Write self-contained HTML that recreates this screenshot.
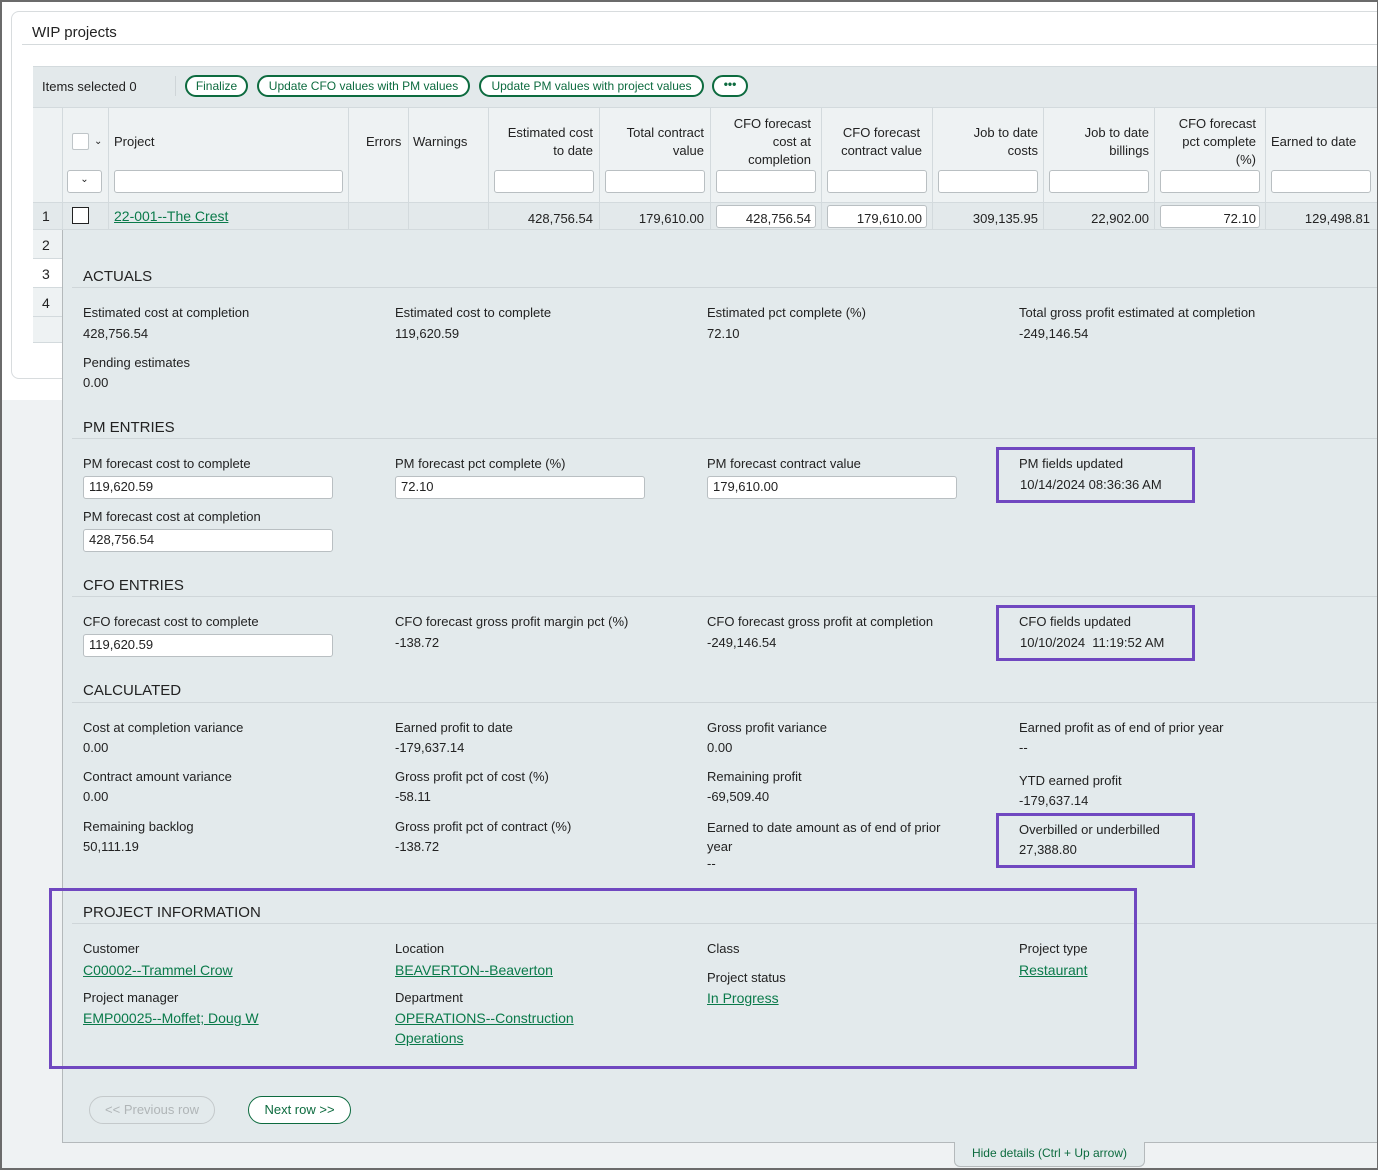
<!DOCTYPE html>
<html><head><meta charset="utf-8"><style>
*{box-sizing:border-box;margin:0;padding:0}
body{width:1378px;height:1170px;position:relative;overflow:hidden;background:#eff2f3;font-family:"Liberation Sans",sans-serif;font-size:13px;color:#222}
.a{position:absolute;white-space:nowrap;line-height:16px}
.l{color:#0a7a4a;text-decoration:underline}
.in{position:absolute;background:#fff;border:1px solid #b9bfc2;border-radius:3px;height:23px}
.btn{position:absolute;top:75px;height:22px;border:2px solid #0d6b3f;border-radius:12px;color:#0d6b3f;font-size:12px;line-height:18px;text-align:center;background:#fff}
.vl{position:absolute;width:1px;background:#d3dadd}
.hd{position:absolute;font-size:15px;line-height:18px;color:#222}
.hr{position:absolute;left:72px;right:0;height:1px;background:#cfd6d9}
.th{position:absolute;line-height:18px;text-align:right;white-space:nowrap}
.cell{position:absolute;top:211px;line-height:16px;text-align:right;white-space:nowrap}
.pb{position:absolute;border:3px solid #7048c0}
</style></head><body>
<div style="position:absolute;left:0;top:0;width:1378px;height:400px;background:#fff"></div>
<div style="position:absolute;left:11px;top:11px;width:1400px;height:368px;border:1px solid #d8dcde;border-radius:8px;background:#fff"></div>
<div class="a" style="left:32px;top:24px;font-size:15px;line-height:18px">WIP projects</div>
<div style="position:absolute;left:22px;top:44px;right:0;height:1px;background:#d5dadc"></div>
<!-- toolbar -->
<div style="position:absolute;left:33px;top:66px;right:0;height:41px;background:#e3e9eb;border-top:1px solid #d3dadd"></div>
<div class="a" style="left:42px;top:79px">Items selected 0</div>
<div style="position:absolute;left:175px;top:76px;width:1px;height:20px;background:#cfd5d8"></div>
<div class="btn" style="left:185px;width:63px">Finalize</div>
<div class="btn" style="left:257px;width:213px">Update CFO values with PM values</div>
<div class="btn" style="left:479px;width:225px">Update PM values with project values</div>
<div class="btn" style="left:712px;width:36px;font-weight:bold;line-height:14px">•••</div>
<!-- header -->
<div style="position:absolute;left:33px;top:107px;right:0;height:95px;background:#eef2f3;border-top:1px solid #d3dadd"></div>
<div class="vl" style="left:62px;top:107px;height:123px"></div>
<div class="vl" style="left:108px;top:107px;height:123px"></div>
<div class="vl" style="left:348px;top:107px;height:123px"></div>
<div class="vl" style="left:408px;top:107px;height:123px"></div>
<div class="vl" style="left:488px;top:107px;height:123px"></div>
<div class="vl" style="left:599px;top:107px;height:123px"></div>
<div class="vl" style="left:710px;top:107px;height:123px"></div>
<div class="vl" style="left:821px;top:107px;height:123px"></div>
<div class="vl" style="left:932px;top:107px;height:123px"></div>
<div class="vl" style="left:1043px;top:107px;height:123px"></div>
<div class="vl" style="left:1154px;top:107px;height:123px"></div>
<div class="vl" style="left:1265px;top:107px;height:123px"></div>
<div style="position:absolute;left:72px;top:133px;width:17px;height:17px;border:1px solid #bfc5c8;background:#fff;border-radius:2px"></div>
<div class="a" style="left:94px;top:134px;font-size:10px">⌄</div>
<div class="in" style="left:67px;top:170px;width:35px;text-align:center;font-size:10px;line-height:18px">⌄</div>
<div class="th" style="left:114px;top:133px">Project</div>
<div class="th" style="left:366px;top:133px">Errors</div>
<div class="th" style="left:413px;top:133px">Warnings</div>
<div class="th" style="right:785px;top:124px">Estimated cost<br>to date</div>
<div class="th" style="right:674px;top:124px">Total contract<br>value</div>
<div class="th" style="right:567px;top:115px">CFO forecast<br>cost at<br>completion</div>
<div class="th" style="right:456px;top:124px;text-align:center">CFO forecast<br>contract value</div>
<div class="th" style="right:340px;top:124px">Job to date<br>costs</div>
<div class="th" style="right:229px;top:124px">Job to date<br>billings</div>
<div class="th" style="right:122px;top:115px">CFO forecast<br>pct complete<br>(%)</div>
<div class="th" style="left:1271px;top:133px">Earned to date</div>
<div class="in" style="left:114px;top:170px;width:229px"></div>
<div class="in" style="left:494px;top:170px;width:100px"></div>
<div class="in" style="left:605px;top:170px;width:100px"></div>
<div class="in" style="left:716px;top:170px;width:100px"></div>
<div class="in" style="left:827px;top:170px;width:100px"></div>
<div class="in" style="left:938px;top:170px;width:100px"></div>
<div class="in" style="left:1049px;top:170px;width:100px"></div>
<div class="in" style="left:1160px;top:170px;width:100px"></div>
<div class="in" style="left:1271px;top:170px;width:100px"></div>
<!-- row 1 -->
<div style="position:absolute;left:33px;top:202px;right:0;height:28px;background:#e3e9eb;border-top:1px solid #d3dadd;border-bottom:1px solid #d3dadd"></div>
<div class="vl" style="left:62px;top:202px;height:28px"></div><div class="vl" style="left:108px;top:202px;height:28px"></div><div class="vl" style="left:348px;top:202px;height:28px"></div><div class="vl" style="left:408px;top:202px;height:28px"></div><div class="vl" style="left:488px;top:202px;height:28px"></div><div class="vl" style="left:599px;top:202px;height:28px"></div><div class="vl" style="left:710px;top:202px;height:28px"></div><div class="vl" style="left:821px;top:202px;height:28px"></div><div class="vl" style="left:932px;top:202px;height:28px"></div><div class="vl" style="left:1043px;top:202px;height:28px"></div><div class="vl" style="left:1154px;top:202px;height:28px"></div><div class="vl" style="left:1265px;top:202px;height:28px"></div>
<div class="a" style="left:42px;top:208px;font-size:14px">1</div>
<div style="position:absolute;left:72px;top:207px;width:17px;height:17px;border:1.5px solid #222;background:#fff"></div>
<div class="a l" style="left:114px;top:208px;font-size:14px">22-001--The Crest</div>
<div class="cell" style="right:785px">428,756.54</div>
<div class="cell" style="right:674px">179,610.00</div>
<div class="in" style="left:716px;top:205px;width:100px"></div><div class="cell" style="right:567px">428,756.54</div>
<div class="in" style="left:827px;top:205px;width:100px"></div><div class="cell" style="right:456px">179,610.00</div>
<div class="cell" style="right:340px">309,135.95</div>
<div class="cell" style="right:229px">22,902.00</div>
<div class="in" style="left:1160px;top:205px;width:100px"></div><div class="cell" style="right:122px">72.10</div>
<div class="cell" style="right:8px">129,498.81</div>
<!-- row numbers -->
<div style="position:absolute;left:33px;top:230px;width:29px;height:29px;background:#eef2f3;border-bottom:1px solid #d3dadd"></div>
<div style="position:absolute;left:33px;top:259px;width:29px;height:29px;background:#fff;border-bottom:1px solid #d3dadd"></div>
<div style="position:absolute;left:33px;top:288px;width:29px;height:29px;background:#eef2f3;border-bottom:1px solid #d3dadd"></div>
<div style="position:absolute;left:33px;top:317px;width:29px;height:26px;background:#eef2f3;border-bottom:1px solid #d3dadd"></div>
<div class="a" style="left:42px;top:237px;font-size:14px">2</div>
<div class="a" style="left:42px;top:266px;font-size:14px">3</div>
<div class="a" style="left:42px;top:295px;font-size:14px">4</div>
<!-- details panel -->
<div style="position:absolute;left:62px;top:230px;right:0;height:913px;background:#e3eaec;border-left:1px solid #b4b9bb;border-bottom:1px solid #b4b9bb"></div>
<div class="hd" style="left:83px;top:268px">ACTUALS</div><div class="hr" style="top:287px"></div>
<div class="a" style="left:83px;top:305px">Estimated cost at completion</div><div class="a" style="left:83px;top:326px">428,756.54</div>
<div class="a" style="left:395px;top:305px">Estimated cost to complete</div><div class="a" style="left:395px;top:326px">119,620.59</div>
<div class="a" style="left:707px;top:305px">Estimated pct complete (%)</div><div class="a" style="left:707px;top:326px">72.10</div>
<div class="a" style="left:1019px;top:305px">Total gross profit estimated at completion</div><div class="a" style="left:1019px;top:326px">-249,146.54</div>
<div class="a" style="left:83px;top:355px">Pending estimates</div><div class="a" style="left:83px;top:375px">0.00</div>

<div class="hd" style="left:83px;top:419px">PM ENTRIES</div><div class="hr" style="top:438px"></div>
<div class="a" style="left:83px;top:456px">PM forecast cost to complete</div><div class="in" style="left:83px;top:476px;width:250px"></div><div class="a" style="left:89px;top:479px">119,620.59</div>
<div class="a" style="left:395px;top:456px">PM forecast pct complete (%)</div><div class="in" style="left:395px;top:476px;width:250px"></div><div class="a" style="left:401px;top:479px">72.10</div>
<div class="a" style="left:707px;top:456px">PM forecast contract value</div><div class="in" style="left:707px;top:476px;width:250px"></div><div class="a" style="left:713px;top:479px">179,610.00</div>
<div class="pb" style="left:996px;top:447px;width:199px;height:56px"></div>
<div class="a" style="left:1019px;top:456px">PM fields updated</div><div class="a" style="left:1020px;top:477px">10/14/2024 08:36:36 AM</div>
<div class="a" style="left:83px;top:509px">PM forecast cost at completion</div><div class="in" style="left:83px;top:529px;width:250px"></div><div class="a" style="left:89px;top:532px">428,756.54</div>

<div class="hd" style="left:83px;top:577px">CFO ENTRIES</div><div class="hr" style="top:596px"></div>
<div class="a" style="left:83px;top:614px">CFO forecast cost to complete</div><div class="in" style="left:83px;top:634px;width:250px"></div><div class="a" style="left:89px;top:637px">119,620.59</div>
<div class="a" style="left:395px;top:614px">CFO forecast gross profit margin pct (%)</div><div class="a" style="left:395px;top:635px">-138.72</div>
<div class="a" style="left:707px;top:614px">CFO forecast gross profit at completion</div><div class="a" style="left:707px;top:635px">-249,146.54</div>
<div class="pb" style="left:996px;top:605px;width:199px;height:56px"></div>
<div class="a" style="left:1019px;top:614px">CFO fields updated</div><div class="a" style="left:1020px;top:635px">10/10/2024&nbsp; 11:19:52 AM</div>

<div class="hd" style="left:83px;top:682px">CALCULATED</div><div class="hr" style="top:702px"></div>
<div class="a" style="left:83px;top:720px">Cost at completion variance</div><div class="a" style="left:83px;top:740px">0.00</div>
<div class="a" style="left:395px;top:720px">Earned profit to date</div><div class="a" style="left:395px;top:740px">-179,637.14</div>
<div class="a" style="left:707px;top:720px">Gross profit variance</div><div class="a" style="left:707px;top:740px">0.00</div>
<div class="a" style="left:1019px;top:720px">Earned profit as of end of prior year</div><div class="a" style="left:1019px;top:740px">--</div>
<div class="a" style="left:83px;top:769px">Contract amount variance</div><div class="a" style="left:83px;top:789px">0.00</div>
<div class="a" style="left:395px;top:769px">Gross profit pct of cost (%)</div><div class="a" style="left:395px;top:789px">-58.11</div>
<div class="a" style="left:707px;top:769px">Remaining profit</div><div class="a" style="left:707px;top:789px">-69,509.40</div>
<div class="a" style="left:1019px;top:773px">YTD earned profit</div><div class="a" style="left:1019px;top:793px">-179,637.14</div>
<div class="a" style="left:83px;top:819px">Remaining backlog</div><div class="a" style="left:83px;top:839px">50,111.19</div>
<div class="a" style="left:395px;top:819px">Gross profit pct of contract (%)</div><div class="a" style="left:395px;top:839px">-138.72</div>
<div class="a" style="left:707px;top:818px;line-height:19px">Earned to date amount as of end of prior<br>year</div><div class="a" style="left:707px;top:856px">--</div>
<div class="pb" style="left:996px;top:813px;width:199px;height:55px"></div>
<div class="a" style="left:1019px;top:822px">Overbilled or underbilled</div><div class="a" style="left:1019px;top:842px">27,388.80</div>

<div class="hr" style="top:923px"></div>
<div class="pb" style="left:49px;top:888px;width:1088px;height:181px"></div>
<div class="hd" style="left:83px;top:904px">PROJECT INFORMATION</div>
<div class="a" style="left:83px;top:941px">Customer</div><div class="a l" style="left:83px;top:962px;font-size:14px">C00002--Trammel Crow</div>
<div class="a" style="left:395px;top:941px">Location</div><div class="a l" style="left:395px;top:962px;font-size:14px">BEAVERTON--Beaverton</div>
<div class="a" style="left:707px;top:941px">Class</div>
<div class="a" style="left:1019px;top:941px">Project type</div><div class="a l" style="left:1019px;top:962px;font-size:14px">Restaurant</div>
<div class="a" style="left:707px;top:970px">Project status</div><div class="a l" style="left:707px;top:990px;font-size:14px">In Progress</div>
<div class="a" style="left:83px;top:990px">Project manager</div><div class="a l" style="left:83px;top:1010px;font-size:14px">EMP00025--Moffet; Doug W</div>
<div class="a" style="left:395px;top:990px">Department</div><div class="a l" style="left:395px;top:1010px;font-size:14px">OPERATIONS--Construction</div><div class="a l" style="left:395px;top:1030px;font-size:14px">Operations</div>

<div style="position:absolute;left:89px;top:1096px;width:126px;height:28px;border:1px solid #c4c9cb;border-radius:14px;color:#b0b5b7;text-align:center;line-height:26px">&lt;&lt; Previous row</div>
<div style="position:absolute;left:248px;top:1096px;width:103px;height:28px;border:1px solid #0d6b3f;border-radius:14px;background:#fff;color:#0d6b3f;text-align:center;line-height:26px">Next row &gt;&gt;</div>
<div style="position:absolute;left:954px;top:1142px;width:191px;height:25px;background:#e3eaec;border:1px solid #b4b9bb;border-top:none;border-radius:0 0 6px 6px;color:#0d6b3f;font-size:12px;text-align:center;line-height:22px">Hide details (Ctrl + Up arrow)</div>
<div style="position:absolute;left:0;top:0;width:1378px;height:1170px;border:2px solid #6b6b6b;border-right-width:1px"></div>
</body></html>
